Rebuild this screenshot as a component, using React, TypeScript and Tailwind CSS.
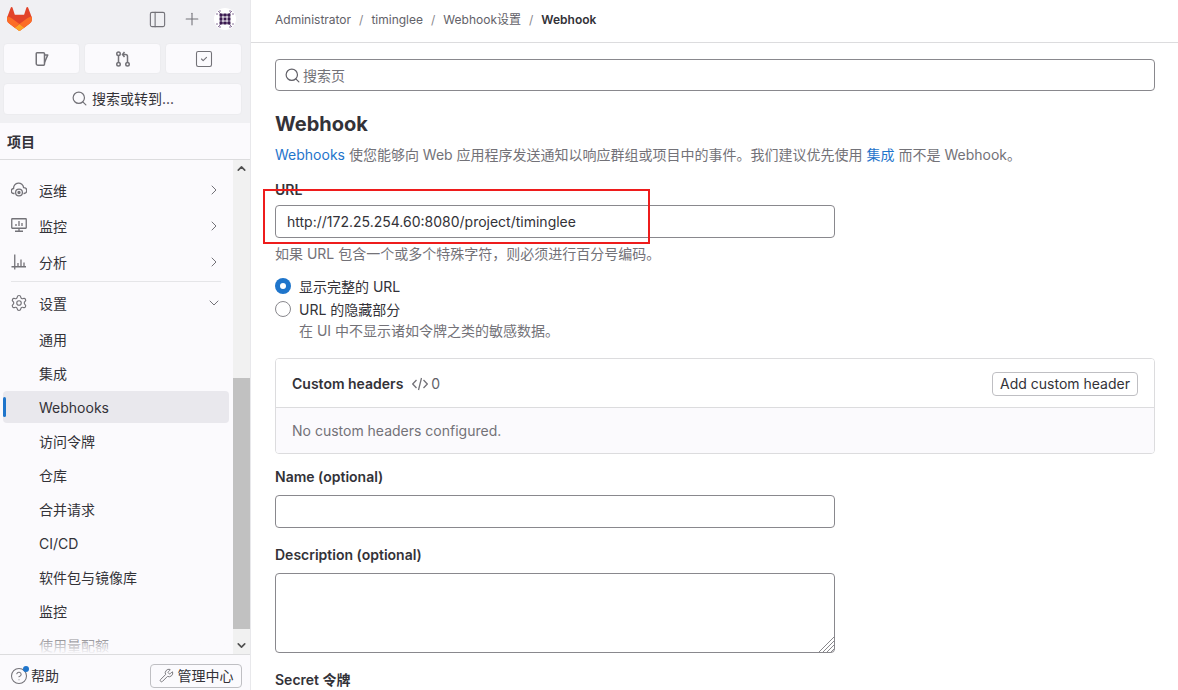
import { ChevronDown, ChevronRight, ChevronUp, CircleHelp, PanelLeft, Plus, Search, Settings, SquareCheck, Wrench } from 'lucide-react';

const FONT = "font-['Inter','Noto_Sans_CJK_SC',sans-serif]";

function Logo() {
  return (
    <svg width="25" height="24" viewBox="0 0 25 24">
      <path d="m24.507 9.5-.034-.09L21.082.562a.896.896 0 0 0-1.694.091l-2.29 7.01H7.825L5.535.653a.898.898 0 0 0-1.694-.09L.451 9.411.416 9.5a6.297 6.297 0 0 0 2.09 7.278l.012.01.03.022 5.16 3.867 2.56 1.935 1.554 1.176a1.051 1.051 0 0 0 1.268 0l1.555-1.176 2.56-1.935 5.197-3.89.014-.01A6.297 6.297 0 0 0 24.507 9.5Z" fill="#E24329" />
      <path d="m24.507 9.5-.034-.09a11.44 11.44 0 0 0-4.56 2.051l-7.447 5.632 4.742 3.584 5.197-3.89.014-.01A6.297 6.297 0 0 0 24.507 9.5Z" fill="#FC6D26" />
      <path d="m7.707 20.677 2.56 1.935 1.555 1.176a1.051 1.051 0 0 0 1.268 0l1.555-1.176 2.56-1.935-4.743-3.584-4.755 3.584Z" fill="#FCA326" />
      <path d="M5.01 11.461a11.43 11.43 0 0 0-4.56-2.05L.416 9.5a6.297 6.297 0 0 0 2.09 7.278l.012.01.03.022 5.16 3.867 4.745-3.584-7.444-5.632Z" fill="#FC6D26" />
    </svg>
  );
}

function Avatar() {
  const dots = [7, 11, 15];
  return (
    <svg width="22" height="22" viewBox="0 0 22 22">
      <circle cx="11" cy="11" r="11" fill="#fff" />
      {dots.map((x) => dots.map((y) => <rect key={`${x}-${y}`} x={x - 1.5} y={y - 1.5} width="3" height="3" fill="#3b1a50" />))}
      <path d="M7 7h8v8H7z" fill="none" stroke="#3b1a50" />
      <path d="M4 3l3 3M18 3l-3 3M4 19l3-3M18 19l-3-3M2 6h2M20 6h-2M2 16h2M20 16h-2M6 2v2M16 2v2M6 20v-2M16 20v-2" stroke="#5a3a70" strokeWidth="1" opacity="0.7" />
    </svg>
  );
}

function IssueIcon() {
  return (
    <svg width="16" height="16" viewBox="0 0 16 16" fill="none" stroke="#737278" strokeWidth="1.5">
      <path d="M3 1.75h6.5a1 1 0 0 1 1 1V13a1.25 1.25 0 0 1-1.25 1.25H4A1.75 1.75 0 0 1 2.25 12.5V2.5a.75.75 0 0 1 .75-.75Z" />
      <path d="M10.5 4h3.25L10.5 11.5" strokeLinejoin="round" />
    </svg>
  );
}

function MergeIcon() {
  return (
    <svg width="16" height="16" viewBox="0 0 16 16" fill="none" stroke="#737278" strokeWidth="1.5">
      <circle cx="3.5" cy="2.75" r="1.75" />
      <circle cx="3.5" cy="13.25" r="1.75" />
      <circle cx="12.5" cy="13.25" r="1.75" />
      <path d="M3.5 4.5v7M12.5 11.5V5.5a2 2 0 0 0-2-2H8M9.5 1 7.5 3.5 9.5 6" />
    </svg>
  );
}

function OpsIcon() {
  return (
    <svg width="16" height="16" viewBox="0 0 16 16" fill="none" stroke="#737278" strokeWidth="1.3">
      <path d="M3.5 11.5H3A2.5 2.5 0 0 1 2.6 6.5 5 5 0 0 1 12.6 5.6a2.9 2.9 0 0 1 .4 5.9h-.5" />
      <circle cx="8" cy="10.5" r="3.4" />
      <circle cx="8" cy="10.5" r="1" fill="#737278" />
    </svg>
  );
}

function MonitorIcon() {
  return (
    <svg width="16" height="16" viewBox="0 0 16 16" fill="none" stroke="#737278" strokeWidth="1.3">
      <rect x="0.75" y="0.75" width="14.5" height="9.5" rx="0.5" />
      <path d="M4 13.25h8M8 10v3M5 8V6M8 8V3M11 8V5" />
    </svg>
  );
}

function ChartIcon() {
  return (
    <svg width="16" height="16" viewBox="0 0 16 16" fill="none" stroke="#737278" strokeWidth="1.3">
      <path d="M3.75 0.5v15M0.5 12.75h14.5M7 12V9M10 12V5.5M13 12V8.5" />
    </svg>
  );
}

function CodeIcon() {
  return (
    <svg width="16" height="16" viewBox="0 0 16 16" fill="none" stroke="#737278" strokeWidth="1.3">
      <path d="M4.5 4 .7 8l3.8 4M11.5 4l3.8 4-3.8 4M9.5 2l-3 12" />
    </svg>
  );
}

function TopButton({ children }: { children: React.ReactNode }) {
  return (
    <div className="flex h-[31px] flex-1 items-center justify-center rounded border border-[#ececef] bg-[#fbfafd]">
      {children}
    </div>
  );
}

function NavGroup({ icon, label, open }: { icon: React.ReactNode; label: string; open?: boolean }) {
  return (
    <div className="flex h-9 items-center pl-[8px] pr-[7px] text-[14px] text-[#333238]">
      <span className="flex w-[28px] shrink-0">{icon}</span>
      <span className="flex-1">{label}</span>
      {open ? <ChevronDown size={16} color="#737278" strokeWidth={1.5} /> : <ChevronRight size={16} color="#737278" strokeWidth={1.5} />}
    </div>
  );
}

function SubItem({ label, active }: { label: string; active?: boolean }) {
  return (
    <div className={`relative flex h-[32px] shrink-0 items-center rounded pl-[36px] text-[14px] text-[#333238] ${active ? 'bg-[#e9e8ed]' : ''}`}>
      {active && <span className="absolute left-0 top-[6px] h-[20px] w-[3px] rounded bg-[#1f75cb]" />}
      {label}
    </div>
  );
}

function Sidebar() {
  return (
    <aside className="flex h-[690px] w-[251px] shrink-0 flex-col border-r border-[#e8e8eb] bg-[#fbfafd]">
      <div className="h-[123px] shrink-0 bg-[#f0f0f3] px-[3px]">
        <div className="mb-[5px] flex h-[38px] items-center">
          <div className="ml-1 flex-1">
            <Logo />
          </div>
          <PanelLeft size={19} color="#737278" strokeWidth={1.4} />
          <Plus size={20} color="#737278" strokeWidth={1.3} className="ml-[15px]" />
          <div className="ml-[12px] mr-[11px]">
            <Avatar />
          </div>
        </div>
        <div className="mr-[5px] flex gap-[4px]">
          <TopButton><IssueIcon /></TopButton>
          <TopButton><MergeIcon /></TopButton>
          <TopButton><SquareCheck size={20} color="#737278" strokeWidth={1.3} /></TopButton>
        </div>
        <div className="mr-[5px] mt-[9px] flex h-[32px] items-center justify-center gap-[4px] rounded border border-[#ececef] bg-[#fbfafd] pb-[2px] text-[14px] text-[#333238]">
          <Search size={17} color="#737278" strokeWidth={1.7} />
          搜索或转到...
        </div>
      </div>
      <div className="flex h-[37px] shrink-0 items-center border-b border-[#dcdcde] pl-[7px] text-[14px] font-semibold text-[#333238]">
        项目
      </div>
      <div className="flex min-h-0 flex-1">
        <div className="relative flex min-h-0 flex-1 flex-col gap-[2px] overflow-hidden pl-[3px] pr-[4px] pt-[12px]">
          <div>
            <NavGroup icon={<OpsIcon />} label="运维" />
            <NavGroup icon={<MonitorIcon />} label="监控" />
            <NavGroup icon={<ChartIcon />} label="分析" />
            <div className="mx-[8px] mb-[3px] mt-[1px] border-t border-[#e5e5e8]" />
            <NavGroup icon={<Settings size={18} color="#737278" strokeWidth={1.5} className="-ml-px" />} label="设置" open />
          </div>
          <SubItem label="通用" />
          <SubItem label="集成" />
          <SubItem label="Webhooks" active />
          <SubItem label="访问令牌" />
          <SubItem label="仓库" />
          <SubItem label="合并请求" />
          <SubItem label="CI/CD" />
          <SubItem label="软件包与镜像库" />
          <SubItem label="监控" />
          <SubItem label="使用量配额" />
          <div className="absolute inset-x-0 bottom-0 h-[28px] bg-gradient-to-b from-[#fbfafd00] to-[#fbfafd]" />
        </div>
        <div className="flex w-[17px] shrink-0 flex-col items-center bg-[#f1f1f1]">
          <ChevronUp size={13} color="#505050" strokeWidth={3} className="mt-[2px]" />
          <div className="mt-[203px] h-[251px] w-full bg-[#c1c1c1]" />
          <ChevronDown size={13} color="#505050" strokeWidth={3} className="mt-[10px]" />
        </div>
      </div>
      <div className="flex h-[36px] shrink-0 items-center border-t border-[#dcdcde] pl-[10px] pr-[8px] pt-[6px] text-[14px] text-[#333238]">
        <span className="relative mr-[3px] flex">
          <CircleHelp size={18} color="#737278" strokeWidth={1.4} />
          <span className="absolute -right-[1px] -top-[1px] h-[6px] w-[6px] rounded-full bg-[#1f75cb]" />
        </span>
        <span className="flex-1">帮助</span>
        <div className="flex h-[24px] w-[92px] items-center justify-center gap-[4px] rounded border border-[#bfbfc3]">
          <Wrench size={15} color="#737278" strokeWidth={1.5} />
          管理中心
        </div>
      </div>
    </aside>
  );
}

function Main() {
  const input = 'block w-[560px] rounded border border-[#89888d] bg-white';
  const label = 'text-[14px] font-semibold leading-[18px] text-[#333238]';
  return (
    <main className="relative min-w-0 flex-1">
      <div className="flex h-[43px] items-center gap-[8px] border-b border-[#dcdcde] pb-[2px] pl-[24px] text-[12px] text-[#626168]">
        <span>Administrator</span>
        <span className="text-[#89888d]">/</span>
        <span>timinglee</span>
        <span className="text-[#89888d]">/</span>
        <span>Webhook设置</span>
        <span className="text-[#89888d]">/</span>
        <span className="font-semibold text-[#333238]">Webhook</span>
      </div>
      <div className="px-[24px] pt-[16px]">
        <div className="flex h-[32px] w-[880px] items-center gap-[2px] rounded border border-[#89888d] pl-[8px] text-[14px] text-[#737278]">
          <Search size={17} color="#626168" strokeWidth={1.7} />
          搜索页
        </div>
        <h1 className="mt-[19px] text-[20px] font-bold leading-[28px] text-[#333238]">Webhook</h1>
        <p className="mt-[7px] text-[14px] leading-[20px] text-[#737278]">
          <span className="text-[#1f75cb]">Webhooks</span> 使您能够向 Web 应用程序发送通知以响应群组或项目中的事件。我们建议优先使用 <span className="text-[#1f75cb]">集成</span> 而不是 Webhook。
        </p>
        <div className={`mt-[16px] ${label}`}>URL</div>
        <input
          readOnly
          value="http://172.25.254.60:8080/project/timinglee"
          className={`${input} mt-[6px] h-[33px] px-[11px] text-[14px] text-[#333238] outline-none`}
        />
        <p className="mt-[6px] text-[14px] leading-[20px] text-[#737278]">如果 URL 包含一个或多个特殊字符，则必须进行百分号编码。</p>
        <div className="mt-[12px] flex h-[20px] items-center gap-[8px] text-[14px] text-[#333238]">
          <span className="flex h-[16px] w-[16px] items-center justify-center rounded-full bg-[#1f75cb]">
            <span className="h-[6px] w-[6px] rounded-full bg-white" />
          </span>
          显示完整的 URL
        </div>
        <div className="mt-[3px] flex h-[20px] items-center gap-[8px] text-[14px] text-[#333238]">
          <span className="h-[16px] w-[16px] rounded-full border border-[#89888d]" />
          URL 的隐藏部分
        </div>
        <p className="mt-[2px] pl-[24px] text-[14px] leading-[20px] text-[#737278]">在 UI 中不显示诸如令牌之类的敏感数据。</p>
        <div className="mt-[17px] w-[880px] overflow-hidden rounded border border-[#dcdcde]">
          <div className="flex h-[49px] items-center border-b border-[#dcdcde] bg-white px-[16px] pt-[1px]">
            <span className="text-[14px] font-semibold text-[#333238]">Custom headers</span>
            <span className="ml-[9px] flex items-center gap-[3px] text-[14px] text-[#626168]">
              <CodeIcon />0
            </span>
            <div className="ml-auto flex h-[24px] w-[146px] items-center justify-center rounded border border-[#bfbfc3] text-[14px] text-[#333238]">
              Add custom header
            </div>
          </div>
          <div className="flex h-[45px] items-center bg-[#fbfafd] pl-[16px] text-[14px] text-[#737278]">No custom headers configured.</div>
        </div>
        <div className={`mt-[14px] ${label}`}>Name (optional)</div>
        <input readOnly className={`${input} mt-[9px] h-[33px]`} />
        <div className={`mt-[18px] ${label}`}>Description (optional)</div>
        <div className="relative mt-[9px] w-[560px]">
          <textarea readOnly className={`${input} h-[80px] resize-none`} />
          <svg width="15" height="15" viewBox="0 0 15 15" className="absolute bottom-[1px] right-[1px]" stroke="#89888d" strokeWidth="1">
            <path d="M0 15 15 0M4 15 15 4M8 15l7-7M12 15l3-3" />
          </svg>
        </div>
        <div className={`mt-[18px] ${label}`}>Secret 令牌</div>
      </div>
      <div className="absolute left-[12px] top-[189px] h-[55px] w-[387px] border-2 border-[#ee1c1c]" />
    </main>
  );
}

export default function App() {
  return (
    <div className={`flex h-[690px] w-[1178px] overflow-hidden bg-white ${FONT}`}>
      <Sidebar />
      <Main />
    </div>
  );
}
